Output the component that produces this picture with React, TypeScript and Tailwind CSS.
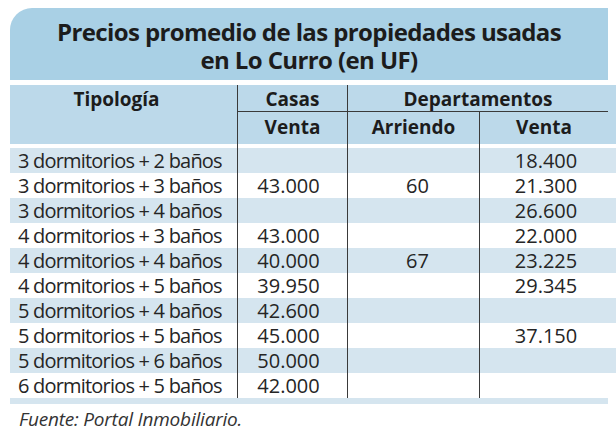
const rows: [string, string, string, string][] = [
  ["3 dormitorios + 2 baños", "", "", "18.400"],
  ["3 dormitorios + 3 baños", "43.000", "60", "21.300"],
  ["3 dormitorios + 4 baños", "", "", "26.600"],
  ["4 dormitorios + 3 baños", "43.000", "", "22.000"],
  ["4 dormitorios + 4 baños", "40.000", "67", "23.225"],
  ["4 dormitorios + 5 baños", "39.950", "", "29.345"],
  ["5 dormitorios + 4 baños", "42.600", "", ""],
  ["5 dormitorios + 5 baños", "45.000", "", "37.150"],
  ["5 dormitorios + 6 baños", "50.000", "", ""],
  ["6 dormitorios + 5 baños", "42.000", "", ""],
];

const cols = "grid grid-cols-[227px_110px_132px_129px]";
const line = "border-l border-[#3a3a3a]";

export default function App() {
  return (
    <div
      className="w-[616px] h-[431px] bg-white pt-[8px] pl-[10px] text-[#252525]"
      style={{ fontFamily: '"Open Sans", "Noto Sans", sans-serif' }}
    >
      <div className="w-[598px] h-[72px] pt-[4px] rounded-tl-[22px] bg-[#a9d0e5] flex items-center justify-center">
        <h1 className="text-center font-bold text-[24px] leading-[28px] tracking-[-0.6px] text-[#1c1c1c]">
          Precios promedio de las propiedades usadas
          <br />
          en Lo Curro (en UF)
        </h1>
      </div>

      <div className={`${cols} grid-rows-[27px_32px] mt-[5px] bg-[#bcd9ea] font-bold text-[19px] text-[#1c1c1c]`}>
        <div className="row-span-2 text-center pr-[14px] leading-[28px]">Tipología</div>
        <div className={`${line} border-b text-center leading-[28px]`}>Casas</div>
        <div className={`${line} border-b col-span-2 text-center leading-[28px]`}>Departamentos</div>
        <div className={`${line} text-center leading-[30px]`}>Venta</div>
        <div className={`${line} text-center leading-[30px]`}>Arriendo</div>
        <div className={`${line} text-center leading-[30px]`}>Venta</div>
      </div>

      <div className={`${cols} h-[4px]`}>
        <div />
        <div className={line} />
        <div className={line} />
        <div className={line} />
      </div>

      {rows.map((r, i) => (
        <div
          key={i}
          className={`${cols} h-[25px] text-[20px] leading-[25px] ${i % 2 === 0 ? "bg-[#d5e5ef]" : "bg-white"}`}
        >
          <div className="pl-[8px] whitespace-nowrap tracking-[-0.8px]">{r[0]}</div>
          <div className={`${line} text-center pr-[8px]`}>{r[1]}</div>
          <div className={`${line} text-center pl-[8px]`}>{r[2]}</div>
          <div className={`${line} text-center pl-[4px]`}>{r[3]}</div>
        </div>
      ))}

      <div className="w-[598px] h-[6px] bg-[#d5e5ef]" />

      <div className="pl-[9px] pt-[3px] italic text-[19px] leading-[24px] tracking-[-0.2px] text-[#333]">
        Fuente: Portal Inmobiliario.
      </div>
    </div>
  );
}
